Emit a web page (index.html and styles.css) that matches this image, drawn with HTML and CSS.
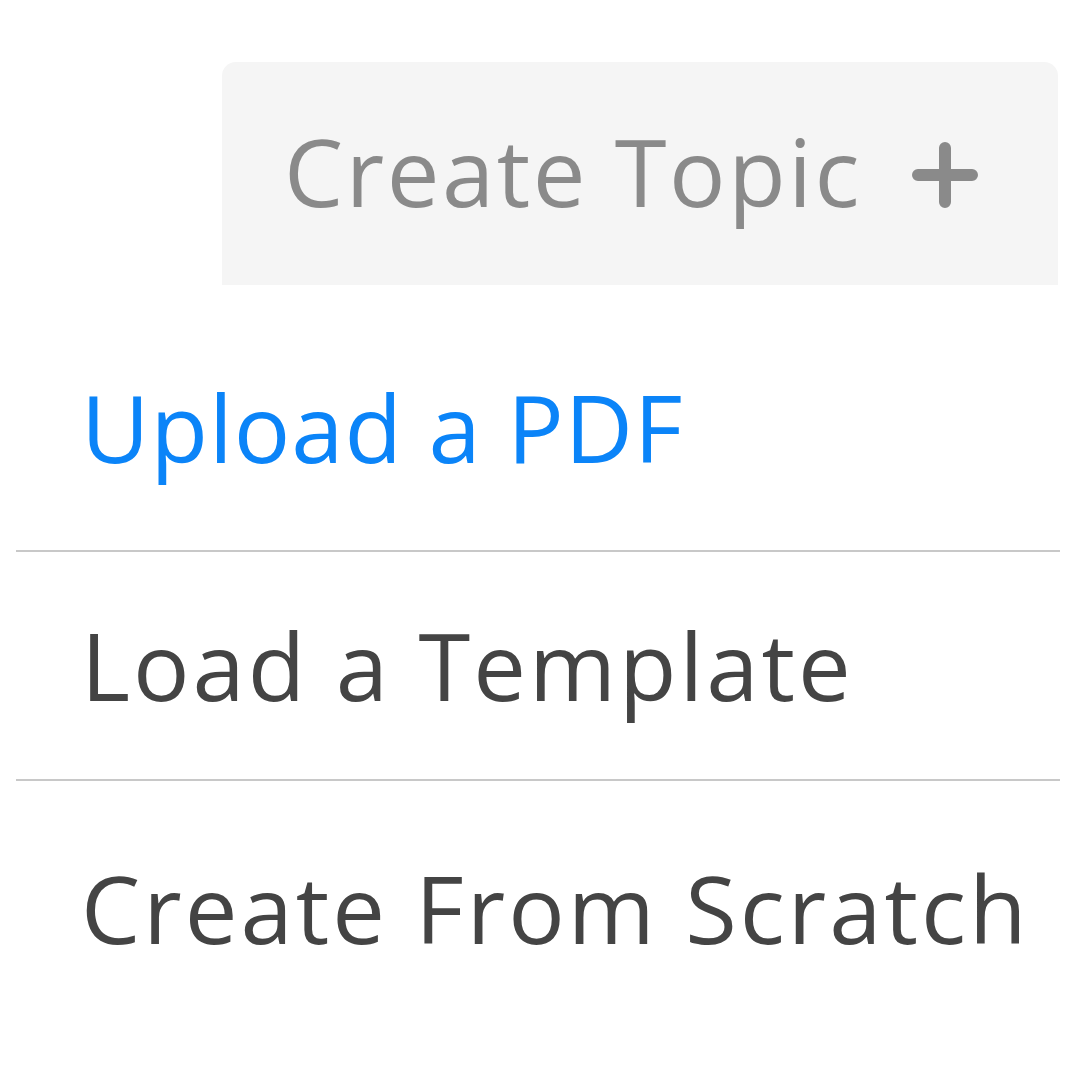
FILE: index.html
```html
<!DOCTYPE html>
<html lang="en">
<head>
<meta charset="utf-8">
<title>Create Topic</title>
<link rel="stylesheet" href="styles.css">
</head>
<body>
<div class="page">
  <div class="header">
    <span class="header-title">Create Topic</span>
    <svg class="plus" width="66" height="66" viewBox="0 0 66 66" aria-hidden="true">
      <path d="M33 6 V60 M6 33 H60" stroke="#8a8a8a" stroke-width="12" stroke-linecap="round" fill="none"/>
    </svg>
  </div>
  <div class="menu">
    <div class="item item-first"><span class="label label-blue">Upload a PDF</span></div>
    <div class="item item-second"><span class="label label-wide">Load a Template</span></div>
    <div class="item item-third"><span class="label label-wide">Create From Scratch</span></div>
  </div>
</div>
</body>
</html>
```
FILE: styles.css
```css
html, body {
  margin: 0;
  padding: 0;
  background: #ffffff;
}
.page {
  width: 1080px;
  height: 1080px;
  padding-top: 62px;
  box-sizing: border-box;
  font-family: "Open Sans", "DejaVu Sans", sans-serif;
}
.header {
  margin-left: 222px;
  width: 836px;
  height: 223px;
  box-sizing: border-box;
  background: #f5f5f5;
  border-radius: 14px 14px 0 0;
  display: flex;
  align-items: center;
  padding-left: 62px;
}
.header-title {
  font-size: 94px;
  line-height: 94px;
  letter-spacing: 2.5px;
  color: #8a8a8a;
  white-space: nowrap;
  margin-top: -5px;
}
.plus {
  margin-left: 50px;
  margin-top: 2px;
  flex: none;
}
.menu {
  margin-left: 16px;
  width: 1044px;
}
.item {
  padding-left: 65px;
}
.label {
  display: block;
  font-size: 94px;
  line-height: 94px;
  color: #444444;
  white-space: nowrap;
}
.label-blue {
  color: #0b84f8;
  letter-spacing: 1px;
}
.label-wide {
  letter-spacing: 3px;
}
.item-first {
  padding-top: 95px;
  padding-bottom: 76px;
  border-bottom: 2px solid #c8c8c8;
}
.item-second {
  padding-top: 66px;
  padding-bottom: 67px;
  border-bottom: 2px solid #c8c8c8;
}
.item-third {
  padding-top: 80px;
}
```
